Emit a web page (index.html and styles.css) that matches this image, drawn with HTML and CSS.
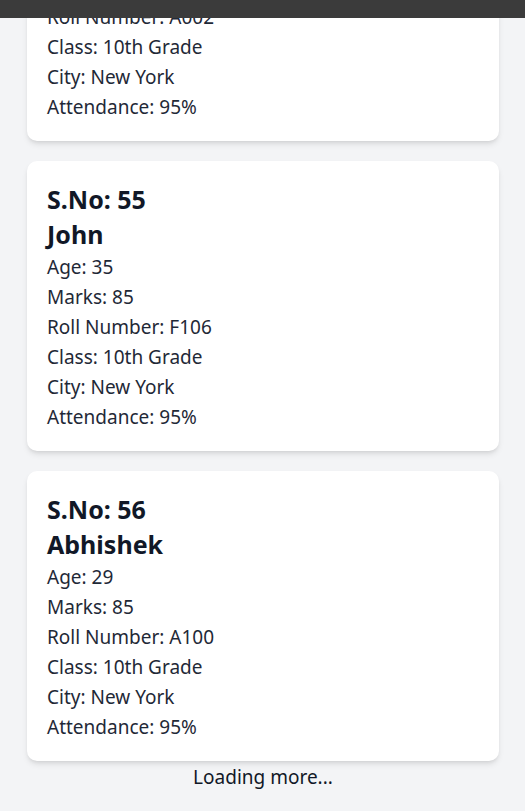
FILE: index.html
```html
<!DOCTYPE html>
<html lang="en">
<head>
<meta charset="utf-8">
<title>Students</title>
<link rel="stylesheet" href="styles.css">
</head>
<body>
<div class="topbar"></div>
<main class="list">
  <article class="card">
    <h2 class="sno">S.No: 54</h2>
    <h3 class="name">Rahul</h3>
    <p class="line">Age: 30</p>
    <p class="line">Marks: 85</p>
    <p class="line">Roll Number: A002</p>
    <p class="line">Class: 10th Grade</p>
    <p class="line">City: New York</p>
    <p class="line">Attendance: 95%</p>
  </article>
  <article class="card">
    <h2 class="sno">S.No: 55</h2>
    <h3 class="name">John</h3>
    <p class="line">Age: 35</p>
    <p class="line">Marks: 85</p>
    <p class="line">Roll Number: F106</p>
    <p class="line">Class: 10th Grade</p>
    <p class="line">City: New York</p>
    <p class="line">Attendance: 95%</p>
  </article>
  <article class="card">
    <h2 class="sno">S.No: 56</h2>
    <h3 class="name">Abhishek</h3>
    <p class="line">Age: 29</p>
    <p class="line">Marks: 85</p>
    <p class="line">Roll Number: A100</p>
    <p class="line">Class: 10th Grade</p>
    <p class="line">City: New York</p>
    <p class="line">Attendance: 95%</p>
  </article>
  <div class="loading">Loading more...</div>
</main>
</body>
</html>
```

FILE: styles.css
```css
html, body {
  margin: 0;
  padding: 0;
  background: #f3f4f6;
  font-family: "Noto Sans", "Open Sans", sans-serif;
  color: #111827;
  overflow: hidden;
}
.topbar {
  position: fixed;
  top: 0;
  left: 0;
  right: 0;
  height: 18px;
  background: #3b3b3b;
  z-index: 10;
}
.list {
  display: flex;
  flex-direction: column;
  gap: 20px;
  padding: 0 26px 0 27px;
  margin-top: -149px;
}
.card {
  background: #ffffff;
  border-radius: 10px;
  box-shadow: 0 4px 6px -1px rgba(0,0,0,0.1), 0 2px 4px -2px rgba(0,0,0,0.1);
  padding: 20px 20px 19px;
}
.sno {
  margin: 0;
  font-size: 25px;
  line-height: 36px;
  font-weight: 700;
}
.name {
  margin: 0;
  font-size: 25px;
  line-height: 35px;
  font-weight: 700;
}
.line {
  margin: 0;
  font-size: 19px;
  line-height: 30px;
  color: #1f2937;
}
.loading {
  margin-top: -19px;
  text-align: center;
  font-size: 19px;
  line-height: 30px;
  color: #111827;
}
```
